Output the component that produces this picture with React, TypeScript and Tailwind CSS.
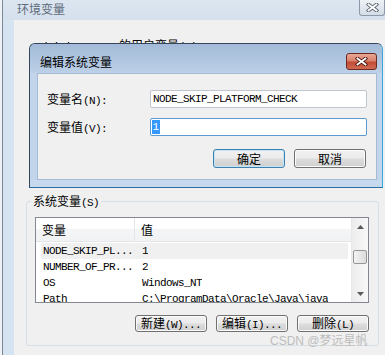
import React from "react";

const cjk = "font-['Noto_Sans_CJK_SC',sans-serif] text-[12px]";
const mono = "font-['Liberation_Mono',monospace] text-[11px] tracking-[-0.6px]";

// split CJK runs from ascii runs: ascii mimics SimSun's 6px half-width glyphs
function Mix({ text }: { text: string }) {
  const parts = text.split(/([\u4e00-\u9fff]+)/).filter(Boolean);
  return (
    <>
      {parts.map((p, i) =>
        /[\u4e00-\u9fff]/.test(p) ? (
          <span key={i} className={cjk}>
            {p}
          </span>
        ) : (
          <span key={i} className={mono}>
            {p}
          </span>
        )
      )}
    </>
  );
}

function CloseGlyph({ dark }: { dark: string }) {
  return (
    <svg width="13" height="9" viewBox="0 0 13 9">
      <path d="M2.5 1.5 L10.5 7.5 M10.5 1.5 L2.5 7.5" stroke={dark} strokeWidth="3.6" strokeLinecap="square" fill="none" />
      <path d="M2.5 1.5 L10.5 7.5 M10.5 1.5 L2.5 7.5" stroke="#ffffff" strokeWidth="1.8" strokeLinecap="square" fill="none" />
    </svg>
  );
}

function WinButton({ label, primary, h }: { label: string; primary?: boolean; h: string }) {
  return (
    <div
      className={`w-[72px] ${h} flex items-center justify-center rounded-[3px] border leading-[14px] text-black bg-[linear-gradient(#f2f2f2_0%,#ebebeb_48%,#dddddd_52%,#cfcfcf_100%)] ${
        primary
          ? "border-[#3c7fb1] shadow-[inset_0_0_0_1px_#c4e5f6]"
          : "border-[#707070] shadow-[inset_0_0_0_1px_#fbfbfb]"
      }`}
    >
      <span>
        <Mix text={label} />
      </span>
    </div>
  );
}

function Arrow({ up }: { up?: boolean }) {
  return (
    <svg width="7" height="4" viewBox="0 0 7 4">
      <path d={up ? "M0 4 L3.5 0 L7 4 Z" : "M0 0 L7 0 L3.5 4 Z"} fill="#5a5a5a" />
    </svg>
  );
}

const rows = [
  { name: "NODE_SKIP_PL...", value: "1", sel: true },
  { name: "NUMBER_OF_PR...", value: "2" },
  { name: "OS", value: "Windows_NT" },
  { name: "Path", value: "C:\\ProgramData\\Oracle\\Java\\java" },
];

export default function App() {
  return (
    <div className="relative w-[385px] h-[355px] overflow-hidden bg-[#eef2f6] select-none text-black">
      {/* background window: 环境变量 */}
      <div className="ml-[2px] h-full flex flex-col border-l border-[#7d8896]">
        <div className="h-[20px] flex items-start bg-[linear-gradient(#dce6f1,#d5e0ed)]">
          <span className={`${cjk} pl-[14px] pt-[2px] leading-[14px] text-[#5d6a7a]`}>环境变量</span>
          <div className="ml-auto w-[26px] h-[16px] flex items-center justify-center rounded-b-[3px] border border-t-0 border-[#8c9aab] bg-[linear-gradient(#eef2f6,#d3dce6)]">
            <CloseGlyph dark="#5b6470" />
          </div>
        </div>
        <div className="flex-1 flex">
          <div className="w-[11px] bg-[#d6e3f1]" />
          <div className="flex-1 bg-[#f0f0f0] pt-[18px] pl-[12px]">
            <div className="ml-[9px] h-[12px] leading-[12px] whitespace-nowrap">
              <Mix text="Administrator 的用户变量(U)" />
            </div>
            <div className="h-[143px]" />

            <fieldset className="w-[353px] border border-[#d5dfe5] rounded-[3px] pb-[13px]">
              <legend className="ml-[4px] px-[2px] leading-[14px]">
                <Mix text="系统变量(S)" />
              </legend>

              <div className="mt-[7px] ml-[8px] w-[334px] h-[86px] flex border border-[#828790] bg-white">
                <div className="flex-1 flex flex-col overflow-hidden">
                  <div className="h-[24px] shrink-0 flex border-b border-[#e3e5e8] bg-[linear-gradient(#ffffff_0%,#ffffff_45%,#f4f5f7_50%,#f1f2f4_100%)]">
                    <div className="w-[99px] pl-[6px] flex items-center border-r border-[#e3e5e8]">
                      <span className={cjk}>变量</span>
                    </div>
                    <div className="pl-[6px] flex items-center">
                      <span className={cjk}>值</span>
                    </div>
                  </div>
                  <div className="pt-[1px]">
                    {rows.map((r) => (
                      <div
                        key={r.name}
                        className={`h-[16px] shrink-0 ml-[5px] mr-[3px] flex items-center whitespace-nowrap ${r.sel ? "bg-[#f0f0f0]" : ""}`}
                      >
                        <div className={`w-[100px] pl-[2px] ${mono}`}>{r.name}</div>
                        <div className={`pl-[1px] ${mono} overflow-hidden`}>{r.value}</div>
                      </div>
                    ))}
                  </div>
                </div>
                <div className="w-[17px] flex flex-col border-l border-[#e8e8e8] bg-[linear-gradient(90deg,#ececec,#f8f8f8)]">
                  <div className="h-[17px] flex items-center justify-center">
                    <Arrow up />
                  </div>
                  <div className="flex-1">
                    <div className="mt-[15px] mx-[1px] h-[14px] rounded-[2px] border border-[#979797] bg-[linear-gradient(90deg,#f3f3f3,#dcdcdc)]" />
                  </div>
                  <div className="h-[17px] flex items-center justify-center">
                    <Arrow />
                  </div>
                </div>
              </div>

              <div className="mt-[12px] flex justify-end gap-[9px] pr-[9px]">
                <WinButton label="新建(W)..." h="h-[17px]" />
                <WinButton label="编辑(I)..." h="h-[17px]" />
                <WinButton label="删除(L)" h="h-[17px]" />
              </div>
            </fieldset>
          </div>
        </div>
      </div>

      {/* watermark */}
      <div className="absolute left-[270px] top-[332px] whitespace-nowrap leading-[14px] text-[#bdbdbd]">
        <span className="font-['Liberation_Sans',sans-serif] text-[12px]">CSDN @</span>
        <span className={cjk}>梦远星帆</span>
      </div>

      {/* modal dialog: 编辑系统变量 */}
      <div className="absolute left-[29px] top-[43px] w-[354px] h-[145px] flex flex-col overflow-hidden rounded-t-[6px] border border-[#34465c] border-r-[#3aa6dc] border-b-[#2c6ea8] bg-[#c4d7ec]">
        <div className="h-[29px] shrink-0 pt-[6px] pl-[10px] flex items-center bg-[linear-gradient(#a3bbd8,#bcd0e7)]">
          <span className={`${cjk} leading-[14px]`}>编辑系统变量</span>
          <div className="ml-auto mr-[5px] w-[31px] h-[17px] flex items-center justify-center rounded-[3px] border border-[#6b2a20] bg-[linear-gradient(#eaa796_0%,#d9826d_45%,#c24b35_55%,#d06a52_100%)]">
            <CloseGlyph dark="#4a1a12" />
          </div>
        </div>
        <div className="flex-1 flex">
          <div className="w-[7px] bg-[#c2d5ea]" />
          <div className="w-[340px] bg-[#f0f0f0] border border-[#a5bad4] pt-[16px] pl-[9px] flex flex-col">
            <div className="flex items-center h-[18px]">
              <div className="w-[103px] leading-[14px]">
                <Mix text="变量名(N):" />
              </div>
              <div className="w-[217px] h-[18px] flex items-center pl-[2px] bg-white border border-[#c0c6cf] rounded-[2px]">
                <span className={mono}>NODE_SKIP_PLATFORM_CHECK</span>
              </div>
            </div>
            <div className="flex items-center h-[18px] mt-[10px]">
              <div className="w-[103px] leading-[14px]">
                <Mix text="变量值(V):" />
              </div>
              <div className="w-[217px] h-[18px] flex items-center pl-[1px] bg-white border border-[#5c9ad2] rounded-[2px]">
                <span className={`${mono} tracking-normal leading-[14px] px-[0.5px] bg-[#3399ff] text-white`}>1</span>
              </div>
            </div>
            <div className="mt-[13px] flex justify-end gap-[9px] pr-[10px]">
              <WinButton label="确定" primary h="h-[19px]" />
              <WinButton label="取消" h="h-[19px]" />
            </div>
          </div>
          <div className="flex-1 bg-[#c2d5ea]" />
        </div>
        <div className="h-[7px] shrink-0 bg-[#c6d9ee]" />
      </div>
    </div>
  );
}
